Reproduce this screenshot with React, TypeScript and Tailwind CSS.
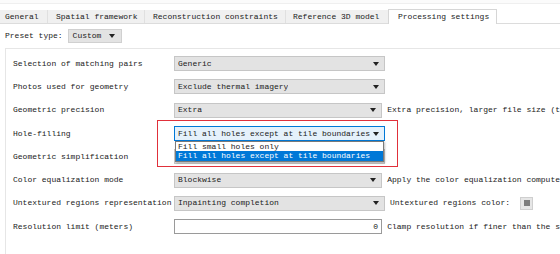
import React from 'react'

const font = { fontFamily: '"Liberation Mono", "DejaVu Sans Mono", monospace' }

function Arrow() {
  return (
    <svg width="6" height="4" viewBox="0 0 6 4" className="shrink-0">
      <path d="M0 0h6L3 4z" fill="#222" />
    </svg>
  )
}

function Combo({ value, active = false }: { value: string; active?: boolean }) {
  return (
    <div
      className={`w-[211px] h-[15px] flex items-center justify-between pl-[3px] pr-[5px] border ${
        active ? 'bg-[#e5f1fb] border-[#0078d7]' : 'bg-[#e3e3e3] border-[#c6c6c6]'
      }`}
    >
      <span className="truncate">{value}</span>
      <Arrow />
    </div>
  )
}

export default function App() {
  const rows = [
    { label: 'Selection of matching pairs', value: 'Generic', note: '' },
    { label: 'Photos used for geometry', value: 'Exclude thermal imagery', note: '' },
    { label: 'Geometric precision', value: 'Extra', note: 'Extra precision, larger file size (t' },
    { label: 'Hole-filling', value: 'Fill all holes except at tile boundaries', note: '', active: true },
    { label: 'Geometric simplification', value: 'Standard', note: '' },
    { label: 'Color equalization mode', value: 'Blockwise', note: 'Apply the color equalization compute' },
  ]

  return (
    <div className="w-[560px] h-[254px] bg-white text-[8px] leading-none text-[#1a1a1a] overflow-hidden relative" style={font}>
      {/* top strip */}
      <div className="h-[4px] border-b border-[#efefef] bg-[#fbfbfb]" />

      {/* tabs */}
      <div className="flex items-end h-[20px] border-b border-[#dcdcdc]">
        <div className="h-[13px] flex items-center px-[5px] bg-[#f0f0f0] border-r border-[#e0e0e0] w-[48px]">General</div>
        <div className="h-[13px] flex items-center pl-[8px] bg-[#f0f0f0] border-r border-[#e0e0e0] w-[97px]">Spatial framework</div>
        <div className="h-[13px] flex items-center pl-[8px] bg-[#f0f0f0] border-r border-[#e0e0e0] w-[141px]">Reconstruction constraints</div>
        <div className="h-[13px] flex items-center pl-[7px] bg-[#f0f0f0] w-[102px]">Reference 3D model</div>
        <div className="h-[15px] flex items-center pl-[9px] bg-white border border-b-0 border-[#d6d6d6] w-[109px] -mb-px">Processing settings</div>
      </div>

      {/* preset */}
      <div className="flex items-center h-[14px] mt-[5px] pl-[5px] gap-[5px]">
        <span>Preset type:</span>
        <div className="h-[14px] w-[54px] flex items-center justify-between pl-[4px] pr-[6px] bg-[#e3e3e3] border border-[#d0d0d0]">
          <span>Custom</span>
          <Arrow />
        </div>
      </div>

      {/* panel */}
      <div className="ml-[5px] mt-[5px] h-[210px] border border-r-0 border-[#e6e6e6] pl-[7px] pt-[3px] relative">
        {rows.map((r) => (
          <div key={r.label} className="h-[23.3px] flex items-center">
            <span className="w-[161px] shrink-0">{r.label}</span>
            <Combo value={r.value} active={r.active} />
            {r.note && <span className="ml-[5px] whitespace-nowrap">{r.note}</span>}
          </div>
        ))}
        <div className="h-[23.3px] flex items-center">
          <span className="w-[161px] shrink-0 whitespace-nowrap">Untextured regions representation</span>
          <Combo value="Inpainting completion" />
          <span className="ml-[5px] whitespace-nowrap">Untextured regions color:</span>
          <div className="ml-[10px] w-[13px] h-[13px] bg-[#e6e6e6] border border-[#cfcfcf] flex items-center justify-center">
            <div className="w-[6px] h-[6px] bg-[#7d7d7d]" />
          </div>
        </div>
        <div className="h-[23.3px] flex items-center">
          <span className="w-[161px] shrink-0">Resolution limit (meters)</span>
          <div className="w-[211px] h-[15px] bg-white border border-[#9a9a9a] flex items-center justify-end pr-[3px]">0</div>
          <span className="ml-[5px] whitespace-nowrap">Clamp resolution if finer than the s</span>
        </div>

        {/* open dropdown list */}
        <div className="absolute left-[169px] top-[92px] w-[209px] bg-white border border-[#7a7a7a] shadow-[1px_1px_2px_rgba(0,0,0,0.25)]">
          <div className="h-[9px] flex items-center pl-[2px]">Fill small holes only</div>
          <div className="h-[10px] flex items-center pl-[2px] bg-[#0078d7] text-white">Fill all holes except at tile boundaries</div>
        </div>
      </div>

      {/* red annotation box */}
      <div className="absolute left-[157px] top-[120px] w-[241px] h-[47px] border-[1.5px] border-[#e0303a]" />
    </div>
  )
}
